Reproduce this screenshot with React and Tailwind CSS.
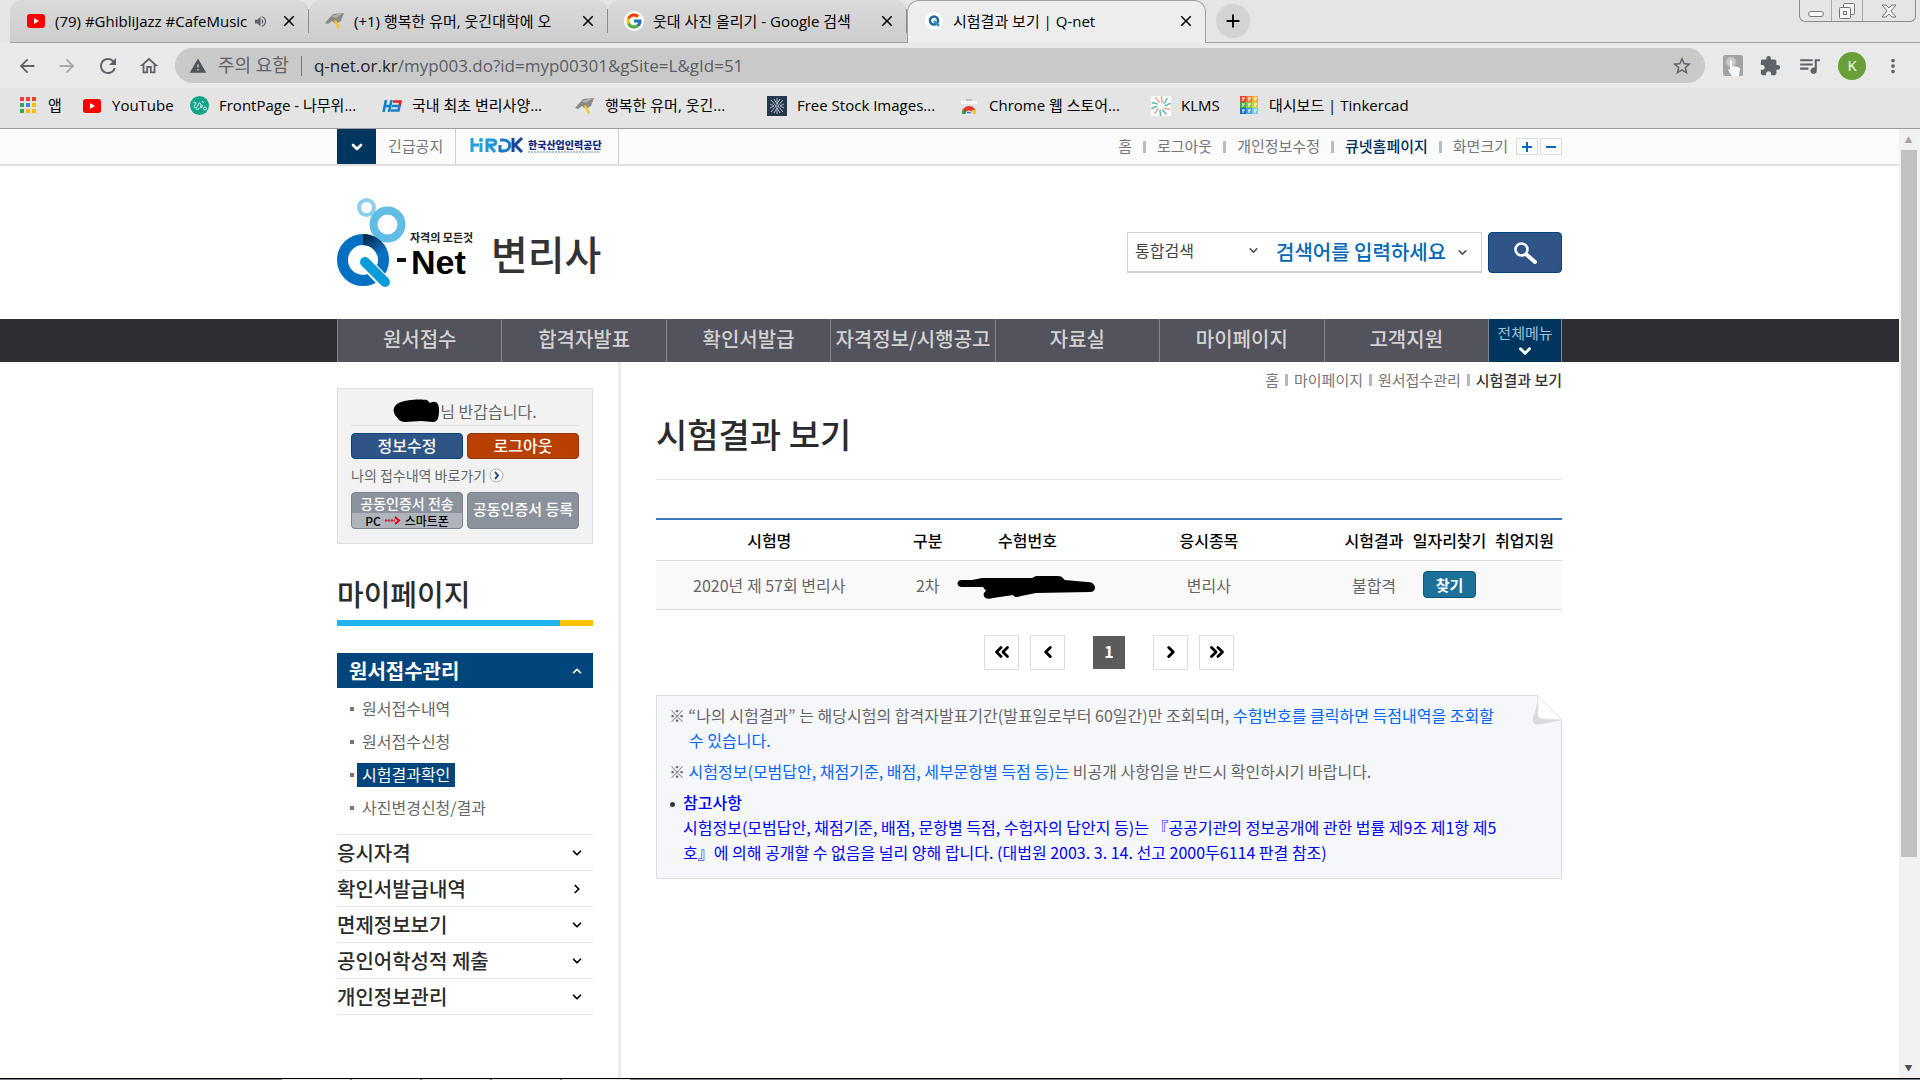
import React, { useState } from 'react';
import {
  MdArrowBack,
  MdArrowForward,
  MdRefresh,
  MdOutlineHome,
  MdWarning,
  MdStarBorder,
  MdExtension,
  MdQueueMusic,
  MdMoreVert,
  MdVolumeUp,
  MdClose,
  MdAdd,
} from 'react-icons/md';
import { FcGoogle } from 'react-icons/fc';
import { ChevronDown, ChevronLeft, ChevronRight, ChevronUp, ChevronsLeft, ChevronsRight } from 'lucide-react';

/* ---------- small drawings ---------- */

const YoutubeIcon = () => (
  <svg width="18" height="14" viewBox="0 0 18 14">
    <rect width="18" height="14" rx="3" fill="#f00" />
    <path d="M7 4v6l5-3z" fill="#fff" />
  </svg>
);

const BirdIcon = () => (
  <svg width="20" height="18" viewBox="0 0 20 18">
    <path d="M0 11 8 2l11-1-3 8-5 3-4-3-4 3z" fill="#8a8a86" />
    <path d="M6 4 18 1l-7 5z" fill="#b4b4ae" />
    <path d="m9 9 2-1 4 8-2 1z" fill="#fbc91b" />
  </svg>
);

const QnetFavicon = () => (
  <svg width="18" height="18" viewBox="0 0 18 18">
    <circle cx="9" cy="9" r="9" fill="#fff" />
    <circle cx="9" cy="8.5" r="4" fill="none" stroke="#1f6a9e" strokeWidth="2.6" />
    <path d="m9 9 5 5" stroke="#2495cf" strokeWidth="2.4" />
  </svg>
);

const AppsIcon = () => (
  <svg width="17" height="17" viewBox="0 0 17 17">
    {['#ea4335', '#ea4335', '#ea4335', '#34a853', '#4285f4', '#fbbc05', '#34a853', '#fbbc05', '#fbbc05'].map((c, i) => (
      <rect key={i} x={(i % 3) * 6} y={Math.floor(i / 3) * 6} width="4" height="4" fill={c} />
    ))}
  </svg>
);

const NamuIcon = () => (
  <svg width="19" height="19" viewBox="0 0 19 19">
    <circle cx="9.5" cy="9.5" r="9.5" fill="#12a488" />
    <path
      d="M3 7c2-2 4 0 2 2s0 4 2 2 1-5 3-4 0 5 1 5 1-3 2-3m-1-3c1-1 2 0 1 1m2 4a1.5 1.5 0 1 0 .1 0M6 13c2 1 3 0 3-1"
      fill="none"
      stroke="#fff"
      strokeWidth="1"
    />
  </svg>
);

const H3Icon = () => (
  <svg width="20" height="12" viewBox="0 0 20 12" fill="none" strokeWidth="2.6">
    <path d="M4 0 1.5 12M9.5 0 7 12M3 6h6" stroke="#1180c8" />
    <path d="M11 1.5h7.5L17.5 6" stroke="#e32227" />
    <path d="M10 6h7.5l-1 4.5H9" stroke="#1180c8" />
  </svg>
);

const SnowIcon = () => (
  <svg width="20" height="20" viewBox="0 0 20 20">
    <rect width="20" height="20" fill="#26374d" />
    <path
      d="M10 2v16M4 4l5 6-5 6M16 4l-5 6 5 6M7 3l3 5 3-5M7 17l3-5 3 5M3 8l4 2-4 2M17 8l-4 2 4 2"
      fill="none"
      stroke="#aebccb"
      strokeWidth="1"
    />
  </svg>
);

const WebStoreIcon = () => (
  <svg width="18" height="18" viewBox="0 0 18 18">
    <path d="M1 4h16v3H1z" fill="#f4f4f4" />
    <path d="M6 3h6" stroke="#b5b5b5" strokeWidth="1.5" />
    <path d="M2 17a7 7 0 0 1 14-2H9z" fill="#e33b2e" />
    <path d="M2 17a7 7 0 0 1 1-5l4 5z" fill="#2ba24c" />
    <path d="M16 13a7 7 0 0 1 0 4h-5l1-4z" fill="#fcc934" />
    <path d="M6 17a3 3 0 0 1 6 0z" fill="#3f7fe8" stroke="#fff" />
  </svg>
);

const KlmsIcon = () => (
  <svg width="20" height="20" viewBox="-10 -10 20 20">
    <rect x="-10" y="-10" width="20" height="20" fill="#fff" />
    {Array.from({ length: 10 }, (_, i) => (
      <path key={i} d="M0-4c3-1-1-3 1-6" fill="none" stroke={i % 3 ? '#62b9ac' : '#e5a58a'} strokeWidth="1.5" transform={`rotate(${i * 36})`} />
    ))}
  </svg>
);

const TinkercadIcon = () => (
  <svg width="19" height="19" viewBox="0 0 19 19">
    {['#e8432e', '#ef7b31', '#f2b134', '#3fa548', '#8bc34a', '#d8cf3a', '#1c6fb7', '#3f9fe0', '#79c4ef'].map((c, i) => {
      const x = (i % 3) * 6;
      const y = Math.floor(i / 3) * 6;
      return (
        <g key={i}>
          <rect x={x} y={y} width="6" height="6" fill={c} />
          <path d={`M${x + 2} ${y + 2}h3M${x + 3} ${y + 2}v3`} stroke="#fff" />
        </g>
      );
    })}
  </svg>
);

const TouchIcon = () => (
  <svg width="20" height="21" viewBox="0 0 20 21">
    <rect width="20" height="21" rx="2" fill="#a3a3a3" />
    <circle cx="8" cy="7" r="5" fill="#c9c9c9" stroke="#b9b9b9" />
    <path d="M7 6c0-1.5 2-1.5 2 0v5l6 1c1 0 2 1 2 2l-1 7H9l-4-6c0-1 1-1 2 0z" fill="#f4f8fb" />
  </svg>
);

const HrdkLogo = () => (
  <svg width="134" height="20" viewBox="0 0 134 20" role="img" aria-label="HRDK 한국산업인력공단">
    <g fill="none" strokeWidth="3">
      <path d="M2 1v14M2 8h7M11 6v9" stroke="#1ea3e0" />
      <path d="M17 15V3h5c5 0 5 5 0 5h-3l6 7" stroke="#1d97dc" />
      <path d="M30 15V8M30 3h3c9 0 9 11 0 11h-3" stroke="#1879c4" />
      <path d="M43 1v14M52 1l-7 7 7 7" stroke="#15489a" />
    </g>
    <circle cx="11" cy="3" r="2" fill="#1ea3e0" />
    <text x="58" y="12" fontSize="10" fontWeight="900" fill="#15287c" fontFamily="Noto Sans CJK KR, sans-serif">
      한국산업인력공단
    </text>
    <path d="M58 15h72" stroke="#6f83b5" strokeDasharray="2 1" />
  </svg>
);

const QnetLogo = () => (
  <svg width="138" height="92" viewBox="0 0 138 92" role="img" aria-label="Q-Net">
    <defs>
      <linearGradient id="qShade" x1="0" y1="0" x2="1" y2="1">
        <stop offset="0" stopColor="#062b4d" />
        <stop offset="1" stopColor="#0a70c2" />
      </linearGradient>
    </defs>
    <circle cx="29.5" cy="10.5" r="7.5" fill="none" stroke="#8ccfec" strokeWidth="4" />
    <circle cx="50.5" cy="27.5" r="14" fill="none" stroke="#62bde4" strokeWidth="8" />
    <circle cx="26" cy="63" r="20.5" fill="none" stroke="#0470c4" strokeWidth="11" />
    <path d="M26 42.5a20.5 20.5 0 0 1 19 13" fill="none" stroke="url(#qShade)" strokeWidth="11" />
    <path d="m28 65 19 20" stroke="#fff" strokeWidth="13" strokeLinecap="round" />
    <path d="m28 65 20 20" stroke="#0a9bdb" strokeWidth="10" strokeLinecap="round" />
    <path d="M60 63h9" stroke="#111" strokeWidth="4" />
    <text x="73" y="45" fontSize="11" fontWeight="700" fill="#222" fontFamily="Noto Sans CJK KR, sans-serif">
      자격의 모든것
    </text>
    <text x="74" y="77" fontSize="34" fontWeight="700" fill="#000" fontFamily="Liberation Sans, sans-serif">
      Net
    </text>
  </svg>
);

/* ---------- browser window ---------- */

const tabs = [
  { title: '(79) #GhibliJazz #CafeMusic', icon: <YoutubeIcon />, audio: true },
  { title: '(+1) 행복한 유머, 웃긴대학에 오', icon: <BirdIcon /> },
  { title: '웃대 사진 올리기 - Google 검색', icon: <span className="rounded-full bg-white p-px"><FcGoogle size={18} /></span> },
  { title: '시험결과 보기 | Q-net', icon: <QnetFavicon />, active: true },
];

const bookmarks = [
  { label: '앱', icon: <AppsIcon />, width: 'w-16' },
  { label: 'YouTube', icon: <YoutubeIcon />, width: 'w-[107px]' },
  { label: 'FrontPage - 나무위...', icon: <NamuIcon />, width: 'w-[193px]' },
  { label: '국내 최초 변리사양...', icon: <H3Icon />, width: 'w-[193px]' },
  { label: '행복한 유머, 웃긴...', icon: <BirdIcon />, width: 'w-[192px]' },
  { label: 'Free Stock Images...', icon: <SnowIcon />, width: 'w-[192px]' },
  { label: 'Chrome 웹 스토어...', icon: <WebStoreIcon />, width: 'w-[192px]' },
  { label: 'KLMS', icon: <KlmsIcon />, width: 'w-[88px]' },
  { label: '대시보드 | Tinkercad', icon: <TinkercadIcon />, width: 'w-[193px]' },
];

function TabStrip() {
  return (
    <div className="flex h-[43px] shrink-0 items-stretch bg-[#e5e5e5] pl-[10px]">
      {tabs.map((tab) => (
        <div
          key={tab.title}
          className={`flex w-[299px] items-center gap-1 rounded-t-xl pl-4 pr-[10px] ${
            tab.active
              ? 'border border-b-0 border-[#a0a0a0] bg-[#ededed] pb-[2px]'
              : 'border-b border-[#a0a0a0] bg-linear-to-b from-[#dadada] to-[#cdcdcd]'
          }`}
        >
          <span className="mr-[5px] flex w-5 shrink-0 justify-center">{tab.icon}</span>
          <span className="min-w-0 flex-1 overflow-hidden whitespace-nowrap text-[15px] text-black">{tab.title}</span>
          {tab.audio && <MdVolumeUp size={15} className="mr-2 shrink-0 text-[#5f6368]" />}
          <button type="button" aria-label="탭 닫기" className="shrink-0">
            <MdClose size={18} className="stroke-current text-black" />
          </button>
          {!tab.active && <span className="-mr-[10px] ml-[6px] h-6 w-px bg-[#8c8c8c]" />}
        </div>
      ))}
      <div className="flex flex-1 justify-between border-b border-[#a0a0a0]">
        <button type="button" aria-label="새 탭" className="ml-[10px] mt-1 flex size-[34px] items-center justify-center rounded-full bg-[#d3d3d3]">
          <MdAdd size={22} className="stroke-current text-black" />
        </button>
        <div className="mr-1 flex h-[22px] rounded-b-md border border-t-0 border-[#8d8d8d] text-[#777]">
          <button type="button" aria-label="최소화" className="flex w-[31px] items-end justify-center pb-1">
            <span className="h-[6px] w-4 rounded-sm border border-[#777] bg-white" />
          </button>
          <button type="button" aria-label="이전 크기로" className="flex w-8 items-center justify-center border-x border-[#a8a8a8]">
            <svg width="18" height="18" viewBox="0 0 18 18" fill="#f4f4f4" stroke="#777">
              <rect x="5.5" y="1.5" width="11" height="11" rx="1" />
              <rect x="1.5" y="5.5" width="11" height="11" rx="1" />
              <rect x="5.5" y="9.5" width="3" height="3" />
            </svg>
          </button>
          <button type="button" aria-label="닫기" className="flex w-[52px] items-center justify-center">
            <svg width="16" height="14" viewBox="0 0 16 14" fill="#f4f4f4" stroke="#777">
              <path d="M1 1h4l3 3 3-3h4l-5 6 5 6h-4L8 10l-3 3H1l5-6z" />
            </svg>
          </button>
        </div>
      </div>
    </div>
  );
}

function Toolbar() {
  return (
    <div className="flex h-[45px] shrink-0 items-center bg-[#e9e9e9] pl-4 pr-4 text-[#5f6368]">
      <div className="flex items-center gap-[18px]">
        <button type="button" aria-label="뒤로"><MdArrowBack size={22} /></button>
        <button type="button" aria-label="앞으로" className="text-[#a9a9a9]"><MdArrowForward size={22} /></button>
        <button type="button" aria-label="새로고침"><MdRefresh size={24} /></button>
        <button type="button" aria-label="홈"><MdOutlineHome size={22} /></button>
      </div>
      <div className="ml-[15px] flex h-[35px] flex-1 items-center rounded-full bg-[#c9c9c9] pl-[14px] pr-3">
        <MdWarning size={18} className="text-[#505357]" />
        <span className="ml-[11px] text-[18px]">주의 요함</span>
        <span className="mx-3 h-5 w-px bg-[#77797c]" />
        <div className="flex-1 text-[17px] text-[#5a5d61]">
          <span className="text-[#222]">q-net.or.kr</span>/myp003.do?id=myp00301&amp;gSite=L&amp;gId=51
        </div>
        <button type="button" aria-label="북마크"><MdStarBorder size={22} /></button>
      </div>
      <div className="ml-[18px] flex items-center gap-4">
        <TouchIcon />
        <MdExtension size={22} />
        <MdQueueMusic size={25} />
        <span className="flex size-7 items-center justify-center rounded-full bg-[#689f38] text-[15px] text-white">K</span>
        <MdMoreVert size={22} />
      </div>
    </div>
  );
}

function Bookmarks() {
  return (
    <div className="flex h-[41px] shrink-0 items-center border-b border-[#9b9b9b] bg-[#e4e4e4] pb-[5px] pl-[18px]">
      {bookmarks.map((b) => (
        <a key={b.label} href="#" className={`flex items-center gap-[10px] whitespace-nowrap text-[15px] text-black ${b.width}`}>
          <span className="flex w-5 shrink-0 justify-center">{b.icon}</span>
          {b.label}
        </a>
      ))}
    </div>
  );
}

/* ---------- q-net page ---------- */

function TopBar() {
  const Bar = () => <span className="mx-[11px] h-3 w-[3px] bg-[#b8bbbf]" />;
  return (
    <div className="border-b-2 border-[#dfdfdf] bg-[#fbfbfb]">
      <div className="mx-auto flex h-[35px] max-w-[1225px] items-stretch justify-between text-[#767676]">
        <div className="flex items-center">
          <button type="button" aria-label="긴급공지 열기" className="flex h-full w-[39px] items-center justify-center bg-[#00365e] text-white">
            <ChevronDown size={16} strokeWidth={4} />
          </button>
          <a href="#" className="px-3 text-[15px]">긴급공지</a>
          <a href="#" className="flex h-full items-center border-x border-[#cfcfcf] px-[14px]">
            <HrdkLogo />
          </a>
        </div>
        <div className="flex items-center text-[15px]">
          <a href="#">홈</a>
          <Bar />
          <a href="#">로그아웃</a>
          <Bar />
          <a href="#">개인정보수정</a>
          <Bar />
          <a href="#" className="font-medium text-[#00305c]">큐넷홈페이지</a>
          <Bar />
          <span>화면크기</span>
          <button type="button" aria-label="크게" className="ml-2 flex h-[17px] w-[22px] items-center justify-center border border-[#dcdcdc] text-[#0068b7]">
            <svg width="10" height="10" stroke="currentColor" strokeWidth="2"><path d="M0 5h10M5 0v10" /></svg>
          </button>
          <button type="button" aria-label="작게" className="ml-[2px] flex h-[17px] w-[22px] items-center justify-center border border-[#dcdcdc] text-[#0068b7]">
            <svg width="10" height="10" stroke="currentColor" strokeWidth="2"><path d="M0 5h10" /></svg>
          </button>
        </div>
      </div>
    </div>
  );
}

function Header() {
  return (
    <header className="mx-auto flex h-[153px] w-full max-w-[1225px] items-center justify-between">
      <div className="flex items-center">
        <a href="#"><QnetLogo /></a>
        <h1 className="ml-4 mt-5 text-[40px] font-medium leading-none text-[#333]">변리사</h1>
      </div>
      <form className="mt-5 flex gap-[6px]" onSubmit={(e) => e.preventDefault()}>
        <div className="flex h-[41px] w-[355px] items-center border border-b-2 border-[#d2d2d2] text-[#555]">
          <div className="relative flex w-[144px] items-center pb-1">
            <select aria-label="검색 범위" className="w-full appearance-none bg-transparent pl-[7px] text-[16px] text-[#444] outline-none">
              <option>통합검색</option>
            </select>
            <ChevronDown size={13} strokeWidth={3} className="pointer-events-none absolute right-3" />
          </div>
          <input
            type="text"
            aria-label="검색어"
            placeholder="검색어를 입력하세요"
            className="min-w-0 flex-1 bg-transparent pl-1 text-[20px] font-medium text-[#0068b7] outline-none placeholder:text-[#0068b7]"
          />
          <ChevronDown size={13} strokeWidth={3} className="mr-3" />
        </div>
        <button type="submit" aria-label="검색" className="flex h-[41px] w-[74px] items-center justify-center rounded border border-[#00457c] bg-[#2f5586]">
          <svg width="24" height="24" viewBox="0 0 24 24" fill="none" stroke="#fff" strokeLinecap="round">
            <circle cx="8.5" cy="8.5" r="6" strokeWidth="2.5" />
            <path d="m14 14 8 7" strokeWidth="4" />
          </svg>
        </button>
      </form>
    </header>
  );
}

const gnb = ['원서접수', '합격자발표', '확인서발급', '자격정보/시행공고', '자료실', '마이페이지', '고객지원'];

function MainNav() {
  return (
    <nav className="bg-[#2d2e33]">
      <div className="mx-auto flex h-[43px] max-w-[1225px]">
        {gnb.map((m) => (
          <a
            key={m}
            href="#"
            className="flex flex-1 items-center justify-center whitespace-nowrap border-l border-[#84848e] bg-[#53535d] pb-1 text-[20px] font-medium text-[#d2d2d2]"
          >
            {m}
          </a>
        ))}
        <button type="button" className="flex w-[74px] flex-col items-center border-x border-[#84848e] bg-[#00365e] pt-1 text-[15px] leading-[19px] text-[#9ec1dc]">
          전체메뉴
          <ChevronDown size={18} strokeWidth={4} className="text-white" />
        </button>
      </div>
    </nav>
  );
}

function LoginBox() {
  return (
    <div className="border border-[#dfdfdf] bg-[#f2f2f2] px-[13px] pb-[14px] pt-2">
      <div className="flex h-[29px] items-center justify-center border-b border-[#dfdfdf] pb-px text-[16px] text-[#666]">
        <svg width="47" height="24" viewBox="0 0 47 24" className="shrink-0">
          <path d="M4 5C12 0 28 0 34 1l3 3c6-3 9 0 9 7s-1 12-6 12l-12-1-16 1c-6 0-7-4-10-7C0 12 0 8 4 5Z" fill="#000" />
        </svg>
        님 반갑습니다.
      </div>
      <div className="mt-[7px] grid grid-cols-2 gap-1 text-[16px] font-medium text-white">
        <button type="button" className="rounded border border-[#00457c] bg-[#2f5586] pb-[2px] leading-[22px]">정보수정</button>
        <button type="button" className="rounded border border-[#963500] bg-[#b94000] pb-[2px] leading-[22px]">로그아웃</button>
      </div>
      <a href="#" className="flex h-[33px] items-center gap-[3px] text-[14px] text-[#666]">
        나의 접수내역 바로가기
        <svg width="15" height="15" viewBox="0 0 15 15" fill="none">
          <circle cx="7.5" cy="7.5" r="6.5" fill="#fff" stroke="#aaa" />
          <path d="m6 4 3 3.5L6 11" stroke="#2a5080" strokeWidth="2" />
        </svg>
      </a>
      <div className="grid h-[37px] grid-cols-2 gap-1 whitespace-nowrap text-white">
        <button type="button" className="flex flex-col rounded border border-[#7d838d] bg-[#8c929c] text-[14px] font-medium">
          <span className="w-full flex-1 leading-[20px]">공동인증서 전송</span>
          <span className="flex w-full items-center justify-center gap-1 rounded-b bg-[#b0b4bc] text-[12px] leading-[15px] text-black">
            PC
            <svg width="16" height="9" viewBox="0 0 16 9" fill="none" stroke="#e60012" strokeWidth="2">
              <path d="M0 4.5h10" strokeDasharray="2 1" />
              <path d="m10 1 4 3.5L10 8" />
            </svg>
            스마트폰
          </span>
        </button>
        <button type="button" className="rounded border border-[#7d838d] bg-[#8c929c] pb-[2px] text-[15px] font-medium">공동인증서 등록</button>
      </div>
    </div>
  );
}

const subMenu = ['원서접수내역', '원서접수신청', '시험결과확인', '사진변경신청/결과'];
const menus = [
  { label: '응시자격', Icon: ChevronDown },
  { label: '확인서발급내역', Icon: ChevronRight },
  { label: '면제정보보기', Icon: ChevronDown },
  { label: '공인어학성적 제출', Icon: ChevronDown },
  { label: '개인정보관리', Icon: ChevronDown },
];

function Sidebar() {
  const [current, setCurrent] = useState('시험결과확인');
  return (
    <aside className="w-[284px] shrink-0 border-r-[3px] border-[#ebebeb] pr-[25px] pt-[26px]">
      <LoginBox />
      <h2 className="mt-[29px] text-[29px] font-medium leading-[40px] text-[#2b2b2b]">마이페이지</h2>
      <div className="mt-[7px] flex h-[6px] bg-[#fdc30b]">
        <div className="w-[87%] bg-[#1fb4eb]" />
      </div>

      <button type="button" className="mt-[27px] flex h-[35px] w-full items-center justify-between bg-[#00457c] pl-3 pr-[9px] text-[20px] font-bold text-white">
        원서접수관리
        <ChevronUp size={14} strokeWidth={3} />
      </button>
      <ul className="border-b border-[#e8e8e8] pb-[10px] pt-1">
        {subMenu.map((m) => (
          <li key={m} className="flex h-[33px] items-center pl-[13px]">
            <span className="mr-[3px] size-1 bg-[#777]" />
            <a
              href="#"
              onClick={() => setCurrent(m)}
              className={`px-[5px] pb-[2px] text-[16px] leading-[22px] ${current === m ? 'bg-[#00457c] text-white' : 'text-[#666]'}`}
            >
              {m}
            </a>
          </li>
        ))}
      </ul>
      {menus.map(({ label, Icon }) => (
        <a key={label} href="#" className="flex h-9 items-center justify-between border-b border-[#e8e8e8] pr-[9px] text-[20px] font-medium text-[#2b2b2b]">
          {label}
          <Icon size={14} strokeWidth={3} className="text-black" />
        </a>
      ))}
    </aside>
  );
}

function ResultTable() {
  return (
    <table className="mt-[38px] w-full table-fixed border-t-2 border-[#3a7abd] text-center text-[16px]">
      <colgroup>
        <col className="w-[25%]" />
        <col className="w-[10%]" />
        <col className="w-[12%]" />
        <col />
        <col className="w-[76px]" />
        <col className="w-[75px]" />
        <col className="w-[75px]" />
      </colgroup>
      <thead>
        <tr className="h-[41px] whitespace-nowrap border-b border-[#dedede] text-black">
          {['시험명', '구분', '수험번호', '응시종목', '시험결과', '일자리찾기', '취업지원'].map((h) => (
            <th key={h} className="p-0 font-medium">{h}</th>
          ))}
        </tr>
      </thead>
      <tbody>
        <tr className="h-[49px] border-b border-[#dedede] bg-[#f9f9f9] text-[#666]">
          <td>2020년 제 57회 변리사</td>
          <td>2차</td>
          <td>
            <div className="-mx-4 flex justify-center pt-1">
              <svg width="140" height="24" viewBox="0 0 140 24" className="shrink-0">
                <path
                  d="M5 5h10l10-2h50l4-2h22c5 0 5 3 7 4l22 2c9-1 11 10 3 10l-54 1-15 3c-4 2-7 1-8-1l-20 3c-9 3-12-4-7-7l-3-4H5c-6 0-6-7 0-7Z"
                  fill="#000"
                />
              </svg>
            </div>
          </td>
          <td>변리사</td>
          <td>불합격</td>
          <td>
            <button type="button" className="rounded border border-[#0c587a] bg-[#1b7198] px-3 text-[15px] font-bold leading-[25px] text-white">찾기</button>
          </td>
          <td />
        </tr>
      </tbody>
    </table>
  );
}

function Pagination() {
  const box = 'flex size-[35px] items-center justify-center border border-[#dedede] text-black';
  return (
    <div className="mt-[25px] flex items-center justify-center">
      <button type="button" aria-label="처음" className={box}><ChevronsLeft size={22} strokeWidth={3} /></button>
      <button type="button" aria-label="이전" className={`ml-[11px] ${box}`}><ChevronLeft size={18} strokeWidth={4} /></button>
      <button type="button" className="mx-7 flex h-[33px] w-8 items-center justify-center bg-[#5b5b5b] pb-[2px] text-[16px] font-bold text-white">1</button>
      <button type="button" aria-label="다음" className={`mr-[11px] ${box}`}><ChevronRight size={18} strokeWidth={4} /></button>
      <button type="button" aria-label="마지막" className={box}><ChevronsRight size={22} strokeWidth={3} /></button>
    </div>
  );
}

function Notice() {
  return (
    <div className="relative mt-[25px] border border-[#dedede] bg-[#f5f7fb] pb-[13px] pl-3 pr-10 pt-[7px] text-[16px] leading-[25px] text-[#666]">
      <svg width="30" height="31" viewBox="0 0 30 31" className="absolute -right-px -top-px">
        <path d="M5 0h25v25z" fill="#fff" />
        <path d="m5 0 25 25-20 4C2 31-1 28 2 20 4 14 6 7 5 0Z" fill="#d9dbdb" />
        <path d="m5 0 25 25-18-1c-6 0-7-3-6-9 0-5 0-10-1-15Z" fill="#fff" stroke="#e1e1e1" />
      </svg>
      <p className="pl-5 -indent-5">
        ※ “나의 시험결과” 는 해당시험의 합격자발표기간(발표일로부터 60일간)만 조회되며,{' '}
        <span className="text-[#0066ff]">
          수험번호를 클릭하면 득점내역을 조회할
          <br />수 있습니다.
        </span>
      </p>
      <p className="mt-[6px] pl-5 -indent-5">
        ※ <span className="text-[#0066ff]">시험정보(모범답안, 채점기준, 배점, 세부문항별 득점 등)는</span> 비공개 사항임을 반드시 확인하시기 바랍니다.
      </p>
      <div className="mt-[6px] flex pl-px text-[#0000ff]">
        <span className="mr-2 mt-3 size-[5px] shrink-0 rounded-full bg-[#333]" />
        <div>
          <strong className="font-medium">참고사항</strong>
          <p>
            시험정보(모범답안, 채점기준, 배점, 문항별 득점, 수험자의 답안지 등)는 『공공기관의 정보공개에 관한 법률 제9조 제1항 제5
            <br />
            호』에 의해 공개할 수 없음을 널리 양해 랍니다. (대법원 2003. 3. 14. 선고 2000두6114 판결 참조)
          </p>
        </div>
      </div>
    </div>
  );
}

function Breadcrumb() {
  const Bar = () => <span className="mx-[6px] h-3 w-[3px] bg-[#b8b8b8]" />;
  return (
    <div className="flex h-9 items-center justify-end text-[15px] text-[#767676]">
      <a href="#">홈</a>
      <Bar />
      <a href="#">마이페이지</a>
      <Bar />
      <a href="#">원서접수관리</a>
      <Bar />
      <span className="font-medium text-[#333]">시험결과 보기</span>
    </div>
  );
}

export default function App() {
  return (
    <div className="flex h-screen flex-col overflow-hidden bg-white font-['Open_Sans','Noto_Sans_CJK_KR',sans-serif]">
      <TabStrip />
      <Toolbar />
      <Bookmarks />

      <div className="flex min-h-0 flex-1 font-['Noto_Sans_CJK_KR',sans-serif]">
        <div className="flex min-w-0 flex-1 flex-col overflow-hidden">
          <TopBar />
          <Header />
          <MainNav />
          <div className="mx-auto flex w-full max-w-[1225px] flex-1">
            <Sidebar />
            <main className="ml-[35px] min-w-0 flex-1">
              <Breadcrumb />
              <h2 className="border-b border-[#e8e8e8] pb-[21px] pt-[11px] text-[34px] font-medium leading-[49px] text-[#2b2b2b]">시험결과 보기</h2>
              <ResultTable />
              <Pagination />
              <Notice />
            </main>
          </div>
        </div>

        {/* page scrollbar */}
        <div className="flex w-[21px] flex-col items-center bg-[#f1f1f1] pr-[2px]">
          <span className="flex h-[21px] items-center text-[8px] text-[#a3a3a3]">▲</span>
          <div className="w-4 flex-1">
            <div className="h-[78%] bg-[#c1c1c1]" />
          </div>
          <span className="flex h-[21px] items-center text-[8px] text-[#505050]">▼</span>
        </div>
      </div>

      {/* edge of the taskbar */}
      <div className="flex h-[2px] shrink-0 gap-[2px] border-t border-black bg-[#7c8494] pl-[282px]">
        {[0, 1, 2, 3, 4].map((i) => (
          <span key={i} className="w-[68px] bg-[#e4e4e4]" />
        ))}
      </div>
    </div>
  );
}
